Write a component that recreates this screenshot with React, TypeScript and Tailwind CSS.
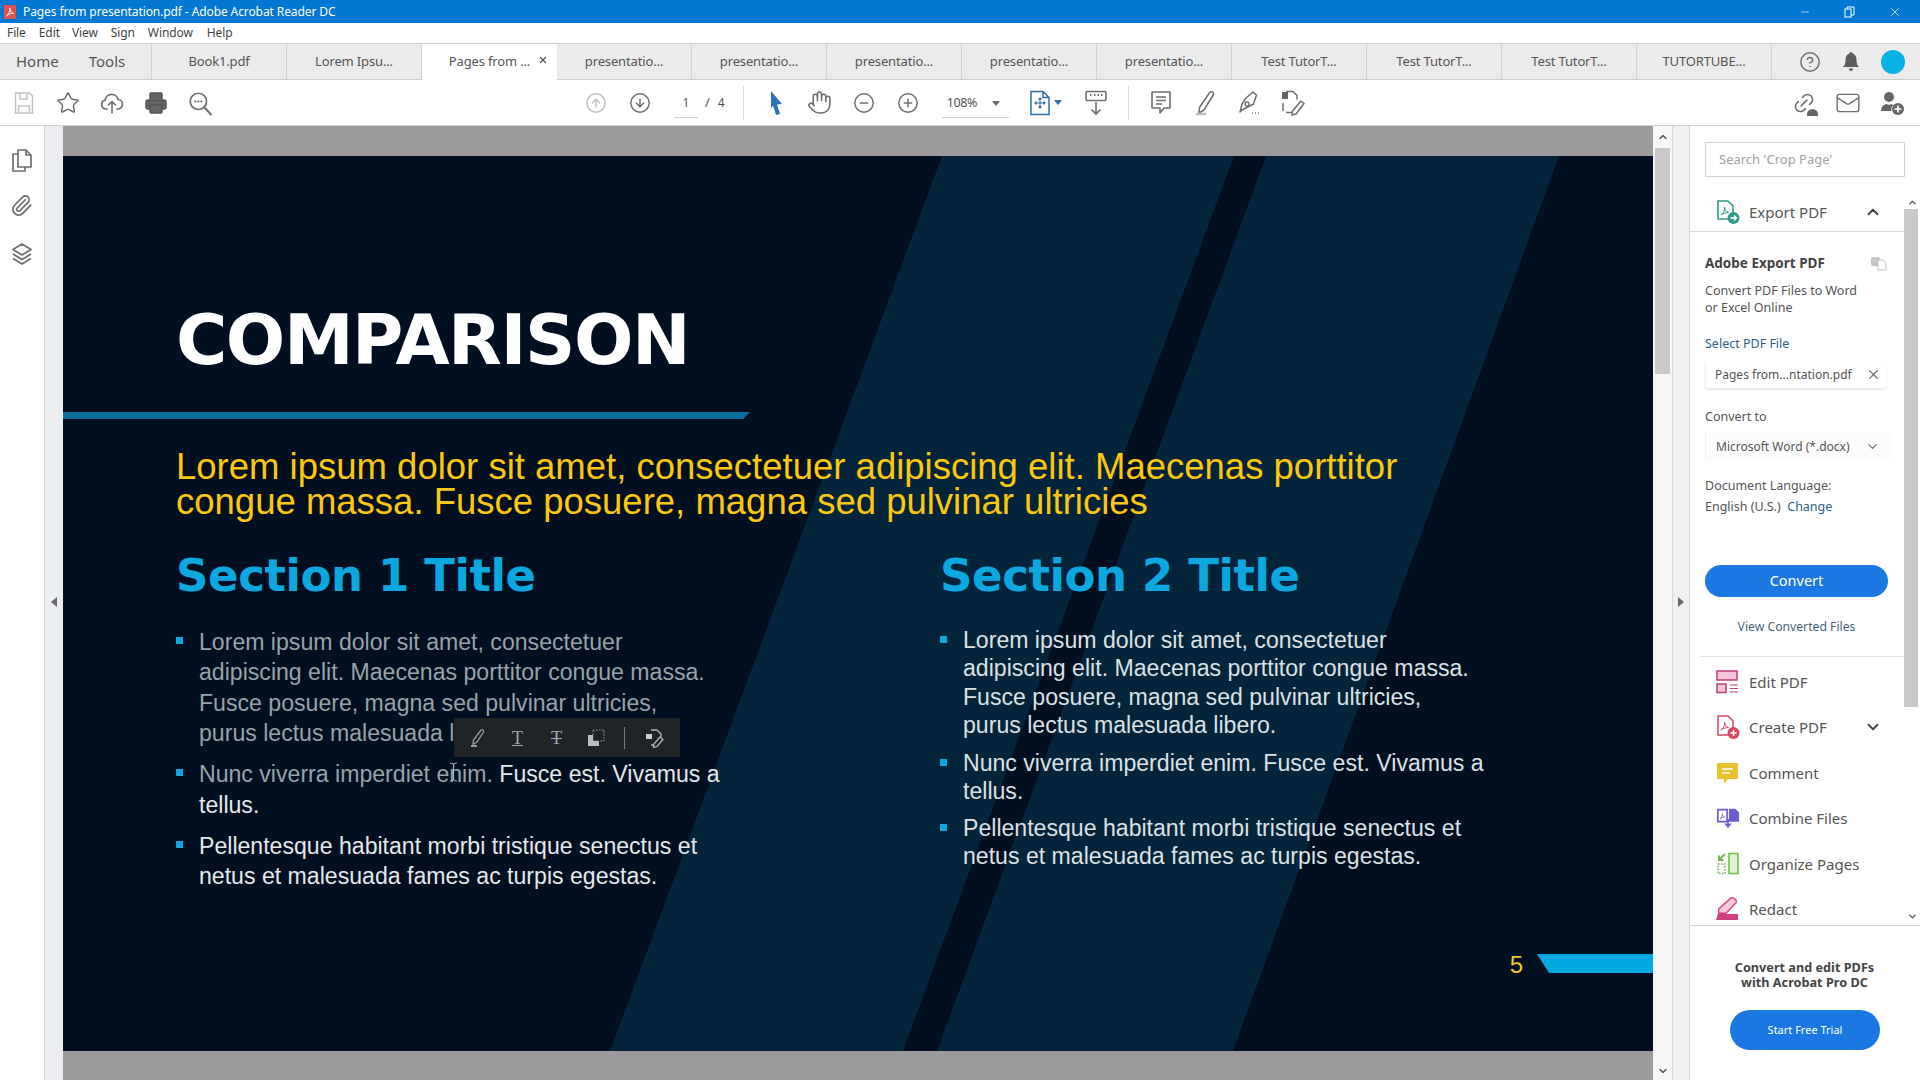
import {
  ChevronDown,
  ChevronUp,
  CircleArrowDown,
  CircleArrowUp,
  CircleHelp,
  CircleMinus,
  CirclePlus,
  Hand,
  Link2,
  Mail,
  Minus,
  Paperclip,
  Printer,
  Star,
  X,
} from "lucide-react";
import type { ReactNode } from "react";

const gray = "#6f6f6f";

const fileTabs = [
  "Book1.pdf",
  "Lorem Ipsu...",
  "Pages from ...",
  "presentatio...",
  "presentatio...",
  "presentatio...",
  "presentatio...",
  "presentatio...",
  "Test TutorT...",
  "Test TutorT...",
  "Test TutorT...",
  "TUTORTUBE...",
];

function Tool({ children }: { children: ReactNode }) {
  return <div className="w-[44px] h-full flex items-center justify-center shrink-0">{children}</div>;
}

function Svg({ size = 24, children }: { size?: number; children: ReactNode }) {
  return (
    <svg width={size} height={size} viewBox="0 0 24 24" fill="none" stroke={gray} strokeWidth="1.6" strokeLinecap="round" strokeLinejoin="round">
      {children}
    </svg>
  );
}

function Vr() {
  return <div className="w-px h-[34px] bg-[#dcdcdc] shrink-0" />;
}

function TitleBar() {
  return (
    <div className="h-[23px] bg-[#0078d4] flex items-center text-white shrink-0">
      <svg width="12" height="14" viewBox="0 0 12 14" className="ml-[4px]">
        <rect width="12" height="14" rx="1" fill="#e8524a" />
        <path d="M2.5 11c2-1 4-5 3.500-8 0 3 1.500 5 3.500 5.500-2.500-.2-5 .5-7 2.500z" fill="none" stroke="#fff" strokeWidth="1" />
      </svg>
      <span className="ml-[7px] text-[12px] tracking-[-0.1px]">Pages from presentation.pdf - Adobe Acrobat Reader DC</span>
      <div className="ml-auto flex items-center">
        <div className="w-[45px] flex justify-center"><Minus size={12} strokeWidth={1.2} /></div>
        <div className="w-[45px] flex justify-center">
          <svg width="11" height="12" viewBox="0 0 11 12" fill="none" stroke="white" strokeWidth="1">
            <rect x="1" y="3" width="6" height="8" />
            <path d="M3 3V1h7v8H7" />
          </svg>
        </div>
        <div className="w-[45px] mr-[3px] flex justify-center"><X size={14} strokeWidth={1.2} /></div>
      </div>
    </div>
  );
}

function MenuBar() {
  const items: [string, string][] = [
    ["File", "ml-[7px]"],
    ["Edit", "ml-[13px]"],
    ["View", "ml-[12px]"],
    ["Sign", "ml-[13px]"],
    ["Window", "ml-[13px]"],
    ["Help", "ml-[14px]"],
  ];
  return (
    <div className="h-[20px] bg-white flex items-center text-[12px] tracking-[-0.1px] text-[#444] shrink-0">
      {items.map(([label, cls]) => (
        <span key={label} className={cls}>{label}</span>
      ))}
    </div>
  );
}

function TabBar() {
  return (
    <div className="h-[37px] bg-[#ebebeb] border-t border-b border-[#cdcdcd] flex shrink-0 text-[#555]">
      <div className="w-[152px] flex items-center border-r border-[#d2d2d2] shrink-0 text-[15px]">
        <span className="ml-[16px]">Home</span>
        <span className="ml-[30px]">Tools</span>
      </div>
      {fileTabs.map((tab, i) => (
        <div
          key={i}
          className={
            i === 2
              ? "relative w-[135px] h-[36px] bg-white flex items-center justify-center text-[13px] tracking-[-0.15px] shrink-0"
              : "w-[135px] flex items-center justify-center border-r border-[#d2d2d2] text-[13px] tracking-[-0.15px] shrink-0"
          }
        >
          {tab}
          {i === 2 && <X size={10} strokeWidth={3} className="absolute right-[9px] top-[11px] text-[#555]" />}
        </div>
      ))}
      <div className="flex-1 flex items-center">
        <div className="ml-[27px]"><CircleHelp size={22} color={gray} strokeWidth={1.6} /></div>
        <svg width="18" height="22" viewBox="0 0 18 22" className="ml-[21px]">
          <path d="M9 1c1 0 1.500.8 1.500 1.500C13 3.300 14.500 5.500 14.500 9c0 4 1 5.500 2.500 7H1c1.500-1.500 2.500-3 2.500-7 0-3.500 1.500-5.700 4-6.500C7.500 1.800 8 1 9 1zM6.800 17.500h4.400C11 19.200 10 20 9 20s-2-.8-2.200-2.500z" fill="#5d5d5d" />
        </svg>
        <div className="ml-[21px] w-[24px] h-[24px] rounded-full bg-[#08b2e4]" />
      </div>
    </div>
  );
}

function ToolBar() {
  return (
    <div className="h-[45px] bg-white flex items-center pl-[2px] pr-[6px] text-[#555] shrink-0">
      <Tool>
        <svg width="20" height="24" viewBox="0 0 20 24" fill="none" stroke="#c4c4c4" strokeWidth="1.5">
          <path d="M1.500 2h14l3 3v17h-17z" />
          <path d="M6 2v6h7V2M4.500 22v-7h11v7" />
        </svg>
      </Tool>
      <Tool><Star size={24} color={gray} strokeWidth={1.5} /></Tool>
      <Tool>
        <Svg>
          <path d="M7 18H6a4.500 4.500 0 0 1-.8-8.900A6.500 6.500 0 0 1 18 8.500a4.700 4.700 0 0 1-.500 9.500H17" />
          <path d="M12 22v-11M8.500 14l3.500-3.500 3.500 3.500" />
        </Svg>
      </Tool>
      <Tool><Printer size={24} color="#555" fill="#666" strokeWidth={1.4} /></Tool>
      <Tool>
        <Svg size={26}>
          <circle cx="10.500" cy="10.500" r="7.500" />
          <path d="M16 16l6 6.500" strokeWidth="2" />
          <path d="M7.500 10.500h.5M10.300 10.500h.5M13 10.500h.5" />
        </Svg>
      </Tool>
      <div className="ml-[352px] flex h-full">
        <Tool><CircleArrowUp size={22} color="#c2c2c2" strokeWidth={1.6} /></Tool>
        <Tool><CircleArrowDown size={22} color={gray} strokeWidth={1.6} /></Tool>
      </div>
      <div className="ml-[12px] w-[24px] h-[28px] mt-[2px] border-b border-[#d0d0d0] flex items-center justify-center text-[12px]">1</div>
      <span className="ml-[7px] text-[13px]">/</span>
      <span className="ml-[8px] text-[12px]">4</span>
      <div className="ml-[18px]"><Vr /></div>
      <div className="ml-[10px] flex h-full">
        <Tool>
          <svg width="16" height="26" viewBox="0 0 16 26"><path d="M3 1l11 13-5 .5 3 9.500-4 1-3-9.500L3 18z" fill="#2d72b8" /></svg>
        </Tool>
        <Tool><Hand size={25} color={gray} strokeWidth={1.5} /></Tool>
        <Tool><CircleMinus size={22} color={gray} strokeWidth={1.6} /></Tool>
        <Tool><CirclePlus size={22} color={gray} strokeWidth={1.6} /></Tool>
      </div>
      <div className="ml-[12px] w-[67px] h-[28px] mt-[2px] border-b border-[#d0d0d0] flex items-center text-[12.500px] tracking-[-0.4px]">
        <span className="ml-[5px]">108%</span>
        <svg width="8" height="5" viewBox="0 0 8 5" className="ml-[15px]"><path d="M0 0h8L4 5z" fill="#666" /></svg>
      </div>
      <div className="ml-[12px] w-[54px] flex items-center pl-[8px]">
        <svg width="22" height="26" viewBox="0 0 22 26" fill="none" stroke="#2f6ea5" strokeWidth="1.500">
          <path d="M2 1.500h12l6 6v17H2zM14 1.500v6h6" />
          <path d="M11 8v10M6 13h10M9.500 9.500 11 8l1.500 1.500M9.500 16.500 11 18l1.500-1.500M7.500 11.500 6 13l1.500 1.500M14.500 11.500 16 13l-1.500 1.500" strokeWidth="1.100" />
        </svg>
        <svg width="8" height="5" viewBox="0 0 8 5" className="ml-[3px]"><path d="M0 0h8L4 5z" fill="#2f6ea5" /></svg>
      </div>
      <div className="ml-[-1px]">
        <Tool>
          <svg width="22" height="26" viewBox="0 0 22 26" fill="none" stroke={gray} strokeWidth="1.600">
            <rect x="1" y="1.500" width="20" height="9" rx="1" />
            <path d="M5 5h1.500M9 5h1.500M12.500 5H14M16 5h1.500" strokeWidth="1.800" />
            <path d="M11 12v12M6.500 19.500 11 24l4.500-4.500" />
          </svg>
        </Tool>
      </div>
      <div className="ml-[10px]"><Vr /></div>
      <div className="ml-[10px] flex h-full">
        <Tool>
          <svg width="22" height="26" viewBox="0 0 22 26" fill="none" stroke={gray} strokeWidth="1.600" strokeLinejoin="round">
            <path d="M2 2h18v16h-6l-4 5v-5H2z" />
            <path d="M6 7h10M6 10.500h10M6 14h6" strokeWidth="1.300" />
          </svg>
        </Tool>
        <Tool>
          <svg width="24" height="26" viewBox="0 0 24 26" fill="none" stroke={gray} strokeWidth="1.500" strokeLinejoin="round">
            <path d="M17 2c1.500-1 4 .5 3.500 2.500L11 20l-5 3 .5-5.500z" />
            <path d="M3 24h10" stroke="#bdbdbd" strokeWidth="2.500" />
          </svg>
        </Tool>
        <Tool>
          <svg width="26" height="26" viewBox="0 0 26 26" fill="none" stroke={gray} strokeWidth="1.500" strokeLinejoin="round">
            <path d="M17 2l3.500 3-3 9L6 20l-2 2 2-8 4-6z" />
            <path d="M11 12a2 2 0 1 0 .1 0M16 23h1M19 23h1M22 23h1" />
          </svg>
        </Tool>
        <Tool>
          <svg width="24" height="26" viewBox="0 0 24 26" fill="none" stroke={gray} strokeWidth="1.500" strokeLinejoin="round">
            <path d="M5 1.500h7l4 4v4M5 22.500h6M2 13v8" />
            <rect x="1" y="2" width="6" height="7" fill="#666" stroke="none" />
            <path d="M20 11l3 2.500-8 10.500-4 1 .5-4z" />
          </svg>
        </Tool>
      </div>
      <div className="ml-auto flex h-full">
        <Tool>
          <div className="relative">
            <Link2 size={24} color={gray} strokeWidth={1.6} className="-rotate-45" />
            <div className="absolute right-[-2px] bottom-[-1px] w-[11px] h-[7px] rounded-t-full bg-[#666]" />
          </div>
        </Tool>
        <Tool><Mail size={26} color={gray} strokeWidth={1.3} /></Tool>
        <Tool>
          <svg width="24" height="26" viewBox="0 0 24 26">
            <circle cx="9" cy="7" r="5" fill="#666" />
            <path d="M1 21c0-4 2-6 5-7 2 1 4 1 6 0l1 1c-2 2-2 4-1.500 6z" fill="#666" />
            <circle cx="18" cy="19" r="6" fill="#666" />
            <path d="M18 15.500v7M14.500 19h7" stroke="#fff" strokeWidth="1.600" />
          </svg>
        </Tool>
      </div>
    </div>
  );
}

function SideRail() {
  return (
    <div className="w-[63px] h-full flex shrink-0">
      <div className="w-[45px] bg-white border-r border-[#d8d8d8] flex flex-col items-center pt-[22px] pr-[1px]">
        <svg width="22" height="24" viewBox="0 0 22 24" fill="none" stroke={gray} strokeWidth="1.700" strokeLinejoin="round">
          <path d="M7 2h8l5 5v12H7zM15 2v5h5" />
          <path d="M7 6H2v17h12v-4" />
        </svg>
        <Paperclip size={23} color={gray} strokeWidth={1.8} className="mt-[22px]" />
        <svg width="22" height="24" viewBox="0 0 22 24" fill="none" stroke={gray} strokeWidth="1.700" strokeLinejoin="round" className="mt-[25px]">
          <path d="M11 2l9 5.500-9 5.500-9-5.500zM2 12l9 5.500 9-5.500M2 16.500l9 5.500 9-5.500" />
        </svg>
      </div>
      <div className="flex-1 bg-[#ecedf0] flex items-center justify-center">
        <svg width="6" height="10" viewBox="0 0 6 10" className="mt-[-2px]"><path d="M6 0v10L0 5z" fill="#6a6a6a" /></svg>
      </div>
    </div>
  );
}

function Bullet({ children }: { children: ReactNode }) {
  return (
    <div className="flex">
      <div className="w-[7px] h-[7px] bg-[#0ea5dc] mt-[10px] shrink-0" />
      <div className="ml-[16px]">{children}</div>
    </div>
  );
}

function Slide() {
  return (
    <div className="relative h-[895px] bg-[#010f20] overflow-hidden flex flex-col font-['Liberation_Sans',sans-serif]">
      <svg className="absolute inset-0" width="1590" height="895" viewBox="0 0 1590 895">
        <polygon points="879,0 1171,0 840,895 547,895" fill="#03243a" />
        <polygon points="1203,0 1496,0 1170,895 874,895" fill="#03243a" />
      </svg>
      <div className="relative flex-1 flex flex-col">
        <h1 className="pl-[113px] mt-[145px] h-[78px] flex items-center text-[70px] font-bold text-white font-['DejaVu_Sans',sans-serif] tracking-[-1.5px] leading-none">
          COMPARISON
        </h1>
        <div className="mt-[33px] w-[687px] h-[7px] bg-[#0b6f9e] [clip-path:polygon(0_0,100%_0,99%_100%,0_100%)]" />
        <p className="pl-[113px] mt-[30px] pr-[190px] text-[36.500px] leading-[35px] text-[#fcc70f]">
          Lorem ipsum dolor sit amet, consectetuer adipiscing elit. Maecenas porttitor congue massa. Fusce posuere, magna sed pulvinar ultricies
        </p>
        <div className="pl-[113px] mt-[27px] grid grid-cols-[764px_1fr]">
          <div>
            <h2 className="text-[45px] tracking-[-0.4px] h-[60px] flex items-center font-bold text-[#0ba8e0] font-['DejaVu_Sans',sans-serif]">Section 1 Title</h2>
            <div className="mt-[21px] text-[23.100px] leading-[30.400px] text-[#e4e8ea] w-[553px]">
              <Bullet>
                <span className="text-[#98a2aa]">
                  Lorem ipsum dolor sit amet, consectetuer adipiscing elit. Maecenas porttitor congue massa. Fusce posuere, magna sed pulvinar ultricies,
                  <br />
                  purus lectus malesuada libero.
                </span>
              </Bullet>
              <div className="mt-[10.500px]">
                <Bullet>
                  <span className="text-[#98a2aa]">Nunc viverra imperdiet enim.</span> Fusce est. Vivamus a tellus.
                </Bullet>
              </div>
              <div className="mt-[11px]">
                <Bullet>Pellentesque habitant morbi tristique senectus et netus et malesuada fames ac turpis egestas.</Bullet>
              </div>
            </div>
          </div>
          <div>
            <h2 className="text-[45px] tracking-[-0.4px] h-[60px] flex items-center font-bold text-[#0ba8e0] font-['DejaVu_Sans',sans-serif]">Section 2 Title</h2>
            <div className="mt-[20px] text-[23.100px] leading-[28.300px] text-[#dbe1e5] w-[553px]">
              <Bullet>
                Lorem ipsum dolor sit amet, consectetuer adipiscing elit. Maecenas porttitor congue massa. Fusce posuere, magna sed pulvinar ultricies,
                <br />
                purus lectus malesuada libero.
              </Bullet>
              <div className="mt-[10px]">
                <Bullet>Nunc viverra imperdiet enim. Fusce est. Vivamus a tellus.</Bullet>
              </div>
              <div className="mt-[8px]">
                <Bullet>Pellentesque habitant morbi tristique senectus et netus et malesuada fames ac turpis egestas.</Bullet>
              </div>
            </div>
          </div>
        </div>
        <div className="mt-auto mb-[74px] flex items-center justify-end">
          <span className="mt-[3px] text-[24px] leading-none text-[#f2c431]">5</span>
          <div className="ml-[14px] w-[116px] h-[19px] bg-[#00a8e2] [clip-path:polygon(0_0,100%_0,100%_100%,12px_100%)]" />
        </div>
      </div>

      {/* floating text-markup toolbar */}
      <div className="absolute left-[391px] top-[562px] w-[226px] h-[39px] bg-[#202427] flex items-center">
        <svg width="18" height="20" viewBox="0 0 18 20" fill="none" stroke="#9b9b9b" strokeWidth="1.300" className="ml-[14px]">
          <path d="M13 2c1.500-1 3 .5 2.500 2L9 14l-4 2.500.5-4.500z" />
          <path d="M3 18h6" strokeWidth="2" />
        </svg>
        <span className="ml-[26px] text-[18px] leading-none text-[#a5a5a5] underline font-['Liberation_Serif',serif]">T</span>
        <span className="ml-[28px] text-[18px] leading-none text-[#a5a5a5] line-through font-['Liberation_Serif',serif]">T</span>
        <svg width="18" height="18" viewBox="0 0 18 18" fill="none" className="ml-[25px]">
          <rect x="6" y="1" width="11" height="11" stroke="#9b9b9b" strokeDasharray="1.500 1.500" />
          <path d="M1 6h5v6h6v5H1z" fill="#bcbcbc" />
        </svg>
        <div className="ml-[19px] w-px h-[22px] bg-[#777]" />
        <svg width="20" height="20" viewBox="0 0 20 20" fill="none" stroke="#b5b5b5" strokeWidth="1.300" className="ml-[20px]">
          <path d="M6 2h6l4 4v3M6 17h3" />
          <rect x="1" y="6" width="6" height="5" fill="#ccc" stroke="none" />
          <path d="M15 9l3 2.500-6 7-3.500 1 .5-3.500z" />
        </svg>
      </div>
      <svg width="9" height="20" viewBox="0 0 9 20" fill="none" stroke="#a8b0b8" strokeWidth="1.200" className="absolute left-[386px] top-[606px]">
        <path d="M1 1c2 0 3 .5 3.500 1.500C5 1.500 6 1 8 1M4.500 2.500v15M1 19c2 0 3-.5 3.500-1.500C5 18.500 6 19 8 19" />
      </svg>
    </div>
  );
}

function DocArea() {
  return (
    <div className="flex-1 h-full flex flex-col bg-[#9c9a9c] overflow-hidden">
      <div className="h-[30px] shrink-0" />
      <Slide />
    </div>
  );
}

function PageScroll() {
  return (
    <div className="w-[19px] h-full bg-[#f6f6f6] flex flex-col items-center shrink-0">
      <ChevronUp size={12} strokeWidth={3} className="mt-[5px] text-[#555]" />
      <div className="w-[15px] h-[226px] bg-[#c9c9c9] mt-[5px]" />
      <ChevronDown size={12} strokeWidth={3} className="mt-auto mb-[3px] text-[#555]" />
    </div>
  );
}

function PaneToggle() {
  return (
    <div className="w-[18px] h-full bg-[#f0f0f0] border-l border-r border-[#d6d6d6] flex items-center justify-center shrink-0">
      <svg width="6" height="10" viewBox="0 0 6 10" className="mt-[-2px]"><path d="M0 0v10l6-5z" fill="#6a6a6a" /></svg>
    </div>
  );
}

function IconExport() {
  return (
    <svg width="24" height="24" viewBox="0 0 24 24" fill="none">
      <path d="M2 1h10l5 5v13H2z" stroke="#2f9a87" strokeWidth="1.600" />
      <path d="M5 15c2-1 4-4 3.500-8 .3 3 1.500 5 4 5.500-2.500 0-5 .8-7.500 2.500z" stroke="#2f9a87" />
      <circle cx="17.500" cy="18" r="6" fill="#2f9a87" />
      <path d="M14.500 18h6M18 15.500l2.500 2.500-2.500 2.500" stroke="#fff" strokeWidth="1.400" />
    </svg>
  );
}
function IconEdit() {
  return (
    <svg width="24" height="24" viewBox="0 0 24 24" fill="none" stroke="#bd3d7c" strokeWidth="1.500">
      <rect x="1" y="1" width="20" height="9" fill="#f7c4dc" />
      <rect x="1" y="14" width="9" height="8.500" fill="#f7c4dc" />
      <path d="M14 15h8M14 18.500h8M14 22h8" strokeWidth="1" />
    </svg>
  );
}
function IconCreate() {
  return (
    <svg width="24" height="24" viewBox="0 0 24 24" fill="none">
      <path d="M2 1h10l5 5v14H2z" stroke="#d9475c" strokeWidth="1.500" />
      <path d="M5 15c2-1 4-4 3.500-8 .3 3 1.500 5 4 5.500-2.500 0-5 .8-7.500 2.500z" stroke="#d9475c" />
      <circle cx="17.500" cy="18" r="6" fill="#d9475c" />
      <path d="M17.500 15v6M14.500 18h6" stroke="#fff" strokeWidth="1.600" />
    </svg>
  );
}
function IconComment() {
  return (
    <svg width="24" height="24" viewBox="0 0 24 24">
      <path d="M2 2h19a1 1 0 0 1 1 1v14a1 1 0 0 1-1 1h-9l-4 5v-5H2a1 1 0 0 1-1-1V3a1 1 0 0 1 1-1z" fill="#e8c32f" />
      <path d="M6 8h11M6 12h8" stroke="#fff" strokeWidth="1.500" />
    </svg>
  );
}
function IconCombine() {
  return (
    <svg width="26" height="24" viewBox="0 0 26 24" fill="none">
      <path d="M2 3h10v13H2z" stroke="#6a5bd6" strokeWidth="1.800" fill="#fff" />
      <path d="M14 2h7l4 4v10H14z" fill="#6a5bd6" />
      <path d="M4.500 13c1.500-1 2.500-3 2.300-6 .2 2 1 3.500 2.700 4-1.700 0-3.500.7-5 2z" stroke="#6a5bd6" strokeWidth=".8" />
      <path d="M9 18h8l-4 5z" fill="#6a5bd6" />
      <path d="M13 13v5" stroke="#6a5bd6" strokeWidth="2" />
    </svg>
  );
}
function IconOrganize() {
  return (
    <svg width="24" height="24" viewBox="0 0 24 24" fill="none" stroke="#6fb84a" strokeWidth="1.500">
      <rect x="13" y="1.500" width="9" height="20" fill="#dff0d3" />
      <path d="M2 12h7v9.500H2z" strokeDasharray="1.500 1.500" />
      <path d="M9 2L3 8M3 3.500V8h4.500" strokeWidth="1.800" />
    </svg>
  );
}
function IconRedact() {
  return (
    <svg width="24" height="24" viewBox="0 0 24 24">
      <path d="M15 1c2-.8 6 2 5 4.500L10 16H3v-4z" fill="none" stroke="#cf3f7f" strokeWidth="1.800" />
      <path d="M15 1c2-.8 6 2 5 4.500L10 16H3v-4z" fill="#f2a5c6" opacity=".6" />
      <path d="M0 23l2-6h20v6z" fill="#cf3f7f" />
    </svg>
  );
}

const toolRows: [ReactNode, string, boolean][] = [
  [<IconEdit />, "Edit PDF", false],
  [<IconCreate />, "Create PDF", true],
  [<IconComment />, "Comment", false],
  [<IconCombine />, "Combine Files", false],
  [<IconOrganize />, "Organize Pages", false],
  [<IconRedact />, "Redact", false],
];

function RightPanel() {
  return (
    <div className="w-[230px] h-full bg-white flex flex-col shrink-0 text-[#555]">
      <div className="h-[71px] pl-[15px] pt-[16px] shrink-0">
        <div className="w-[200px] h-[35px] border border-[#d4d4d4] flex items-center pl-[13px] text-[13px] text-[#a2a2a2]">
          Search 'Crop Page'
        </div>
      </div>
      <div className="flex-1 flex min-h-0">
        <div className="w-[214px] overflow-hidden shrink-0">
          <div className="h-[35px] pb-[4px] border-b border-[#d9d9d9] flex items-center pl-[26px]">
            <IconExport />
            <span className="ml-[9px] text-[15px]">Export PDF</span>
            <ChevronUp size={18} strokeWidth={2.500} className="ml-auto mr-[22px] text-[#444]" />
          </div>
          <div className="pl-[15px]">
            <div className="mt-[22px] h-[18px] flex items-center text-[13.500px] font-bold text-[#444] pr-[17px]">
              Adobe Export PDF
              <svg width="17" height="15" viewBox="0 0 17 15" fill="none" className="ml-auto">
                <rect x="1" y="1" width="9" height="9" rx="2" fill="#c6c6c6" />
                <path d="M8 4h5l3 3v7H8z" fill="#fff" stroke="#c0c0c0" />
              </svg>
            </div>
            <p className="mt-[10px] text-[12.500px] leading-[17px]">Convert PDF Files to Word<br />or Excel Online</p>
            <div className="mt-[19px] h-[17px] text-[12.500px] leading-[17px] text-[#2c5f86]">Select PDF File</div>
            <div className="mt-[9px] w-[182px] h-[28px] border-l border-b border-[#eee] rounded-[3px] shadow-[0_1px_2px_#e6e6e6] flex items-center pl-[9px] text-[12px]">
              Pages from...ntation.pdf
              <X size={15} strokeWidth={2} className="ml-auto mr-[6px] text-[#777]" />
            </div>
            <div className="mt-[19px] h-[17px] text-[12.500px] leading-[17px]">Convert to</div>
            <div className="mt-[7px] w-[185px] h-[29px] border-l border-[#eee] bg-[#fcfcfc] rounded-[3px] flex items-center pl-[10px] text-[12px]">
              Microsoft Word (*.docx)
              <ChevronDown size={15} strokeWidth={2} className="ml-auto mr-[10px] text-[#777]" />
            </div>
            <p className="mt-[14px] text-[12.500px] leading-[21px]">
              Document Language:<br />English (U.S.)&nbsp; <span className="text-[#2c5f86]">Change</span>
            </p>
            <div className="mt-[48px] w-[183px] h-[32px] rounded-full bg-[#1b78e2] flex items-center justify-center text-[14.500px] text-white">
              Convert
            </div>
            <div className="mt-[21px] w-[183px] h-[18px] flex items-center justify-center text-[12.200px] text-[#4a6378]">
              View Converted Files
            </div>
          </div>
          <div className="mt-[20px] ml-[10px] border-t border-[#e2e2e2]" />
          <div className="mt-[2px]">
            {toolRows.map(([icon, label, more]) => (
              <div key={label} className="h-[45.500px] flex items-center pl-[26px]">
                <div className="w-[24px] flex justify-center">{icon}</div>
                <span className="ml-[9px] text-[15px]">{label}</span>
                {more && <ChevronDown size={18} strokeWidth={2.500} className="ml-auto mr-[22px] text-[#444]" />}
              </div>
            ))}
          </div>
        </div>
        <div className="w-[16px] flex flex-col items-center">
          <ChevronUp size={11} strokeWidth={3} className="text-[#555]" />
          <div className="w-[14px] h-[498px] bg-[#c9c9c9] mt-[1px] self-start" />
          <ChevronDown size={11} strokeWidth={3} className="mt-auto mb-[3px] text-[#555]" />
        </div>
      </div>
      <div className="h-[155px] border-t border-[#d4d4d4] flex flex-col items-center shrink-0">
        <p className="mt-[34px] text-[12.700px] leading-[15px] font-bold text-center text-[#444] ml-[-1px]">
          Convert and edit PDFs<br />with Acrobat Pro DC
        </p>
        <div className="mt-[20px] w-[150px] h-[40px] rounded-full bg-[#1b78e2] flex items-center justify-center text-[11px] text-white">
          Start Free Trial
        </div>
      </div>
    </div>
  );
}

export default function App() {
  return (
    <div className="w-full h-screen overflow-hidden flex flex-col bg-white font-['Noto_Sans',sans-serif]">
      <TitleBar />
      <MenuBar />
      <TabBar />
      <ToolBar />
      <div className="flex-1 flex min-h-0 border-t border-[#d0d0d0]">
        <SideRail />
        <DocArea />
        <PageScroll />
        <PaneToggle />
        <RightPanel />
      </div>
    </div>
  );
}
